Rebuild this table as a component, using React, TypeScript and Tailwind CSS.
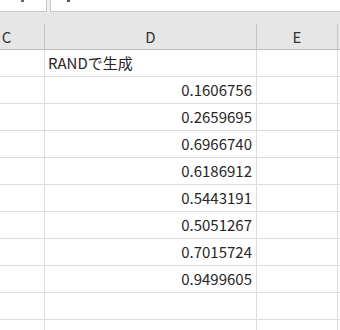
import React from 'react'

const values = ['0.1606756', '0.2659695', '0.6966740', '0.6186912', '0.5443191', '0.5051267', '0.7015724', '0.9499605']

const font = { fontFamily: '"Noto Sans CJK JP", "Noto Sans", sans-serif' }

const cols = 'grid grid-cols-[76px_212px_81px_1fr]'

const Row: React.FC<{ d?: string; label?: boolean }> = ({ d, label }) => (
  <div className={`${cols} h-[27px]`}>
    <div className="border-r border-b border-[#dcdcdc]" />
    <div
      className={`flex items-end pb-[3px] border-r border-b border-[#dcdcdc] leading-[20px] text-[15px] text-[#262626] ${
        label ? 'justify-start pl-[3px]' : 'justify-end pr-[4px]'
      }`}
    >
      {d}
    </div>
    <div className="border-r border-b border-[#dcdcdc]" />
    <div className="border-b border-[#dcdcdc]" />
  </div>
)

const App: React.FC = () => {
  return (
    <div className="w-[340px] h-[330px] overflow-hidden bg-white" style={font}>
      {/* name box + formula bar */}
      <div className="flex h-[12px] bg-[#efefef]">
        <div className="relative w-[47px] bg-white border-r border-b border-[#c8c8c8]">
          <span className="absolute left-[21px] top-0 w-[3px] h-[2px] bg-[#666]" />
        </div>
        <div className="w-[3px]" />
        <div className="relative flex-1 bg-white border-l border-b border-[#c8c8c8]">
          <span className="absolute left-[16px] top-0 w-[3px] h-[2px] bg-[#555]" />
        </div>
      </div>

      <div className="-ml-[31px]">
        {/* column headers */}
        <div className="bg-[#e6e6e6] pt-[12px]">
          <div className={`${cols} h-[26px] border-b border-[#bdbdbd] text-[15px] leading-[20px] text-[#333]`}>
            <div className="flex items-center justify-center border-r border-[#c4c4c4]">C</div>
            <div className="flex items-center justify-center border-r border-[#c4c4c4]">D</div>
            <div className="flex items-center justify-center border-r border-[#c4c4c4]">E</div>
            <div />
          </div>
        </div>

        <Row d="RANDで生成" label />
        {values.map((v) => (
          <Row key={v} d={v} />
        ))}
        <Row />
        <Row />
      </div>
    </div>
  )
}

export default App
